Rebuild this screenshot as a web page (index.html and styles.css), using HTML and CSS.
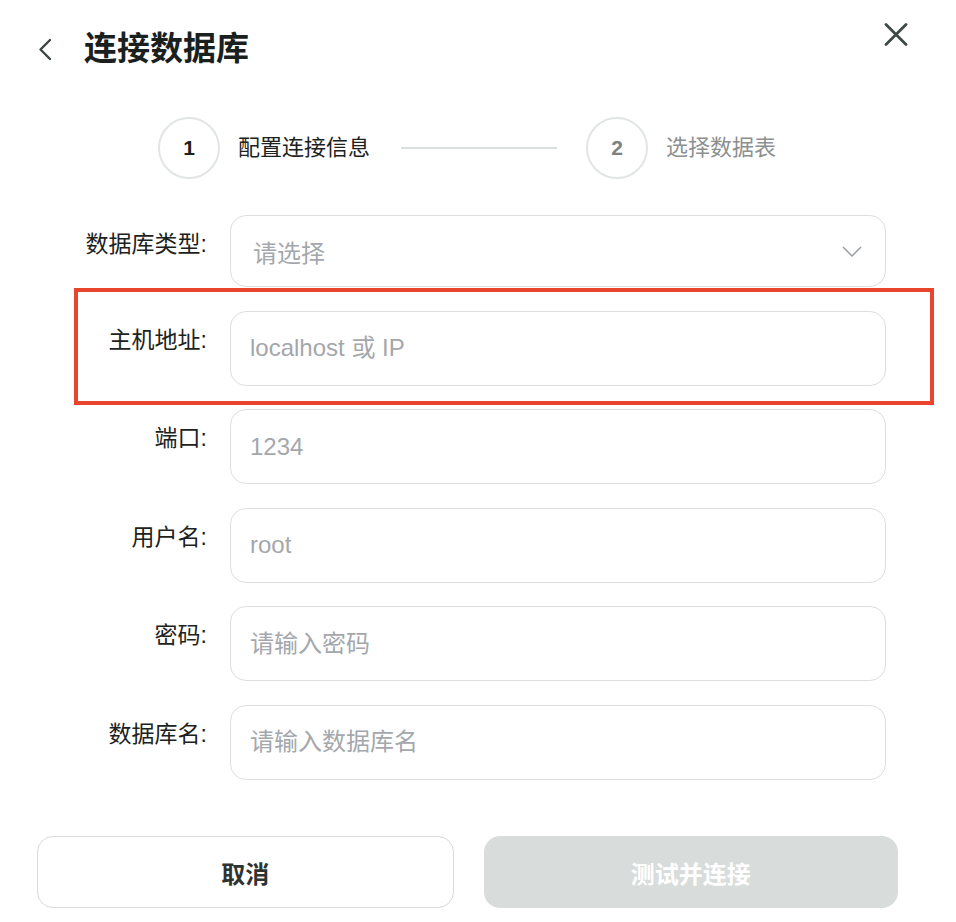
FILE: index.html
```html
<!DOCTYPE html>
<html lang="zh-CN">
<head>
<meta charset="utf-8">
<title>连接数据库</title>
<link rel="stylesheet" href="styles.css">
</head>
<body>
<div class="dialog">
  <header class="header">
    <div class="header-left">
      <svg class="back" width="14" height="23" viewBox="0 0 14 23"><polyline points="12,2 2.5,11.5 12,21" fill="none" stroke="#3b4441" stroke-width="2.4" stroke-linecap="round" stroke-linejoin="round"/></svg>
      <h1 class="title">连接数据库</h1>
    </div>
    <svg class="close" width="24" height="23" viewBox="0 0 24 23"><path d="M2 1.5 L22 21.5 M22 1.5 L2 21.5" fill="none" stroke="#3d4a47" stroke-width="2.8" stroke-linecap="round"/></svg>
  </header>

  <div class="steps">
    <div class="step-circle active">1</div>
    <div class="step-text active">配置连接信息</div>
    <div class="step-line"></div>
    <div class="step-circle">2</div>
    <div class="step-text">选择数据表</div>
  </div>

  <div class="form">
    <div class="row">
      <label class="label">数据库类型:</label>
      <div class="field select">
        <span class="placeholder">请选择</span>
        <svg width="20" height="11" viewBox="0 0 20 11"><polyline points="1,1 10,10 19,1" fill="none" stroke="#9a9da1" stroke-width="1.5"/></svg>
      </div>
    </div>
    <div class="row highlighted">
      <label class="label">主机地址:</label>
      <input class="field input" placeholder="localhost 或 IP">
    </div>
    <div class="row">
      <label class="label">端口:</label>
      <input class="field input" placeholder="1234">
    </div>
    <div class="row">
      <label class="label">用户名:</label>
      <input class="field input" placeholder="root">
    </div>
    <div class="row">
      <label class="label">密码:</label>
      <input class="field input" placeholder="请输入密码">
    </div>
    <div class="row">
      <label class="label">数据库名:</label>
      <input class="field input" placeholder="请输入数据库名">
    </div>
  </div>

  <div class="actions">
    <button class="btn btn-cancel">取消</button>
    <button class="btn btn-primary">测试并连接</button>
  </div>
</div>
</body>
</html>
```

FILE: styles.css
```css
* { box-sizing: border-box; }

body {
  margin: 0;
  background: #ffffff;
  font-family: "Liberation Sans", "Noto Sans CJK SC", sans-serif;
  color: #1c2220;
}

.dialog {
  width: 956px;
}

.header {
  display: flex;
  justify-content: space-between;
  align-items: flex-start;
  padding: 23px 48px 0 38px;
}

.header-left {
  display: flex;
  align-items: center;
  gap: 32px;
  height: 44px;
  margin-top: 4px;
}

.back { display: block; }
.close { display: block; }

.title {
  margin: 0;
  font-size: 33px;
  line-height: 44px;
  font-weight: 700;
  color: #1a201e;
}

.steps {
  display: flex;
  align-items: center;
  margin-top: 46px;
  padding-left: 158px;
  height: 62px;
}

.step-circle {
  width: 62px;
  height: 62px;
  border: 2px solid #e2e5e5;
  border-radius: 50%;
  display: flex;
  align-items: center;
  justify-content: center;
  font-size: 21px;
  font-weight: 700;
  color: #7d8181;
}

.step-circle.active { color: #1c2220; }

.step-text {
  margin-left: 18px;
  font-size: 22px;
  line-height: 30px;
  color: #8d9090;
}

.step-text.active { color: #1c2220; }

.step-line {
  width: 156px;
  height: 1.5px;
  background: #dcdfdf;
  margin: 0 29px 0 31px;
}

.form {
  display: flex;
  flex-direction: column;
  gap: 23.5px;
  margin-top: 36px;
}

.row {
  display: flex;
  align-items: flex-start;
  gap: 23px;
  width: 886px;
  position: relative;
}

.row.highlighted::after {
  content: "";
  position: absolute;
  left: 74px;
  top: -22.5px;
  right: -48px;
  bottom: -19.5px;
  border: 4px solid #e9452c;
  pointer-events: none;
}

.label {
  width: 207px;
  text-align: right;
  font-size: 23px;
  line-height: 30px;
  padding-top: 14px;
  color: #1c2220;
}

.field {
  width: 656px;
  height: 75px;
  border: 1.5px solid #dcdfdf;
  border-radius: 16px;
  background: #fff;
  font-family: "Liberation Sans", "Noto Sans CJK SC", sans-serif;
  font-size: 24px;
  color: #1c2220;
}

.input {
  padding: 0 19px;
  outline: none;
  margin: 0;
}

.input::placeholder { color: #a4a7ac; }

.select {
  height: 72px;
  display: flex;
  align-items: center;
  justify-content: space-between;
  padding: 0 23px 0 22px;
}

.placeholder { color: #a4a7ac; }

.actions {
  display: flex;
  gap: 30px;
  margin-top: 56.5px;
  padding: 0 58px 0 37px;
}

.btn {
  flex: 1;
  height: 72px;
  border-radius: 16px;
  font-family: "Liberation Sans", "Noto Sans CJK SC", sans-serif;
  font-size: 24px;
  font-weight: 700;
  cursor: pointer;
}

.btn-cancel {
  background: #ffffff;
  border: 1.5px solid #d9d9df;
  color: #2f3332;
}

.btn-primary {
  background: #d8dcdb;
  border: none;
  color: #ffffff;
}
```
